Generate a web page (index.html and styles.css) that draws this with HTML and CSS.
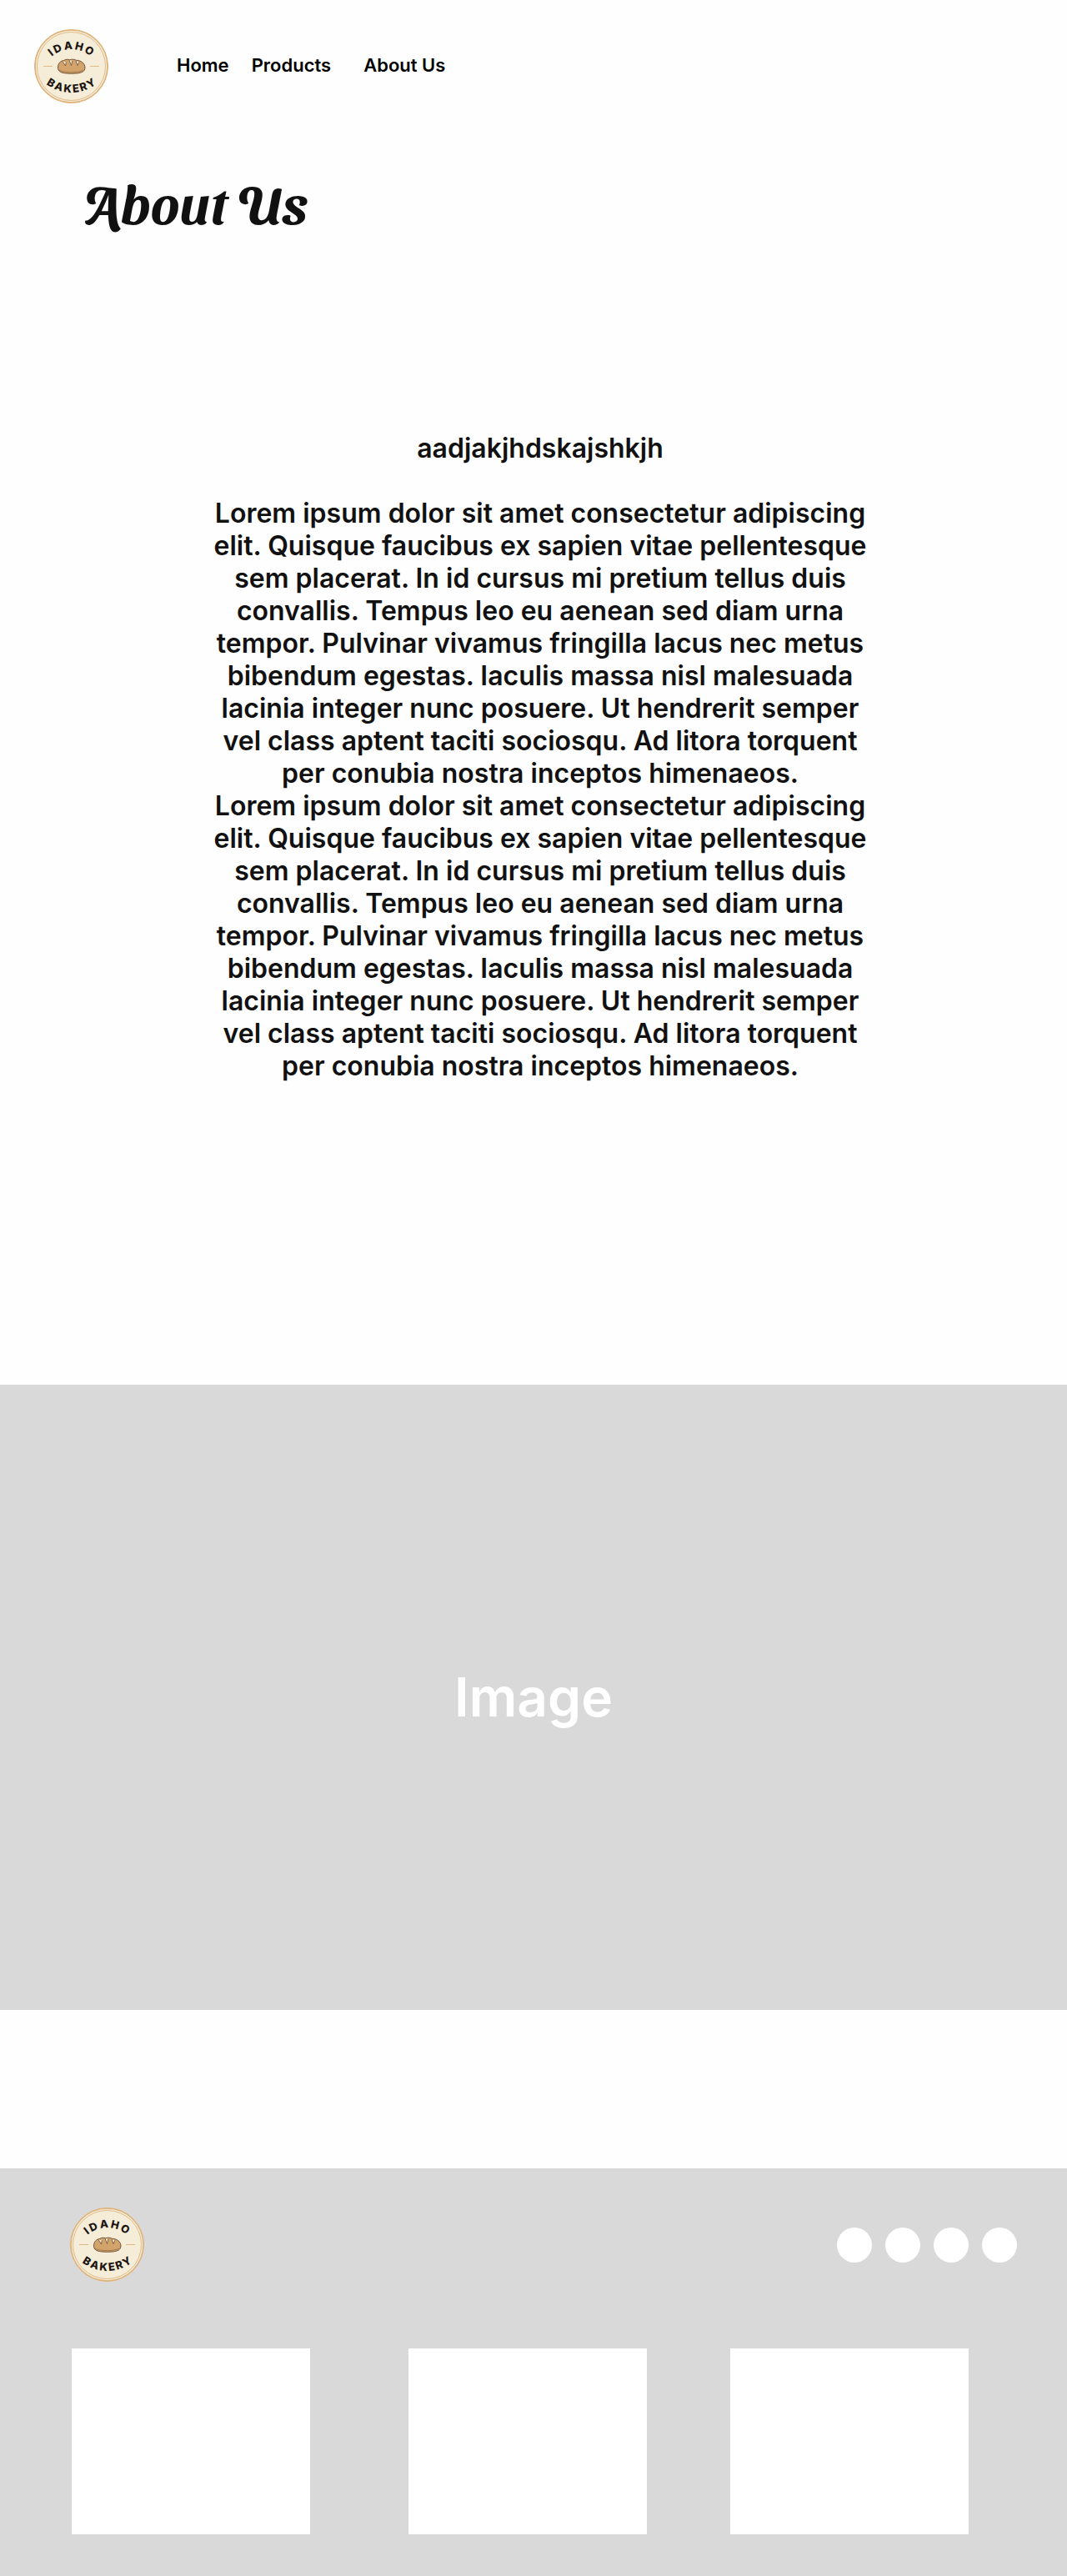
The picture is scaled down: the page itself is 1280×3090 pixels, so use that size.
FILE: index.html
```html
<!DOCTYPE html>
<html lang="en">
<head>
<meta charset="utf-8">
<meta name="viewport" content="width=device-width, initial-scale=1">
<title>About Us - Idaho Bakery</title>
<link rel="stylesheet" href="styles.css">
</head>
<body>
<svg class="symbols" aria-hidden="true">
  <symbol id="logo" viewBox="0 0 89 89">
    <circle cx="44.5" cy="44.5" r="44" fill="#f5edd8" stroke="#e0b278" stroke-width="1"/>
    <circle cx="44.5" cy="44.5" r="43.3" fill="none" stroke="#e0b278" stroke-width="1.2"/>
    <circle cx="44.5" cy="44.5" r="41" fill="none" stroke="#d6a466" stroke-width=".7"/>
    <path d="M11 44.5h11M67 44.5h11" stroke="#e0b983" stroke-width="1"/>
    <path d="M28.500 46c0-5 3-8 7-8.500 2-1.500 5-1.500 7-.8 3-.9 6-.6 8 .6 5-.2 10.500 3.500 10.500 8.700 0 5-4 7.300-16.500 7.300s-16-2.500-16-7.300z" fill="#d3a36c" stroke="#5a3a20" stroke-width=".8"/>
    <path d="M34 38.500l3.500 5.500.8-4.500M42 37l2.500 6.500 1.300-5.500M50 38l2 5.500 1.800-4" fill="#f5edd8" stroke="#5a3a20" stroke-width=".7"/>
    <path d="M30 49c4 3.500 25 3.500 29 0" fill="none" stroke="#7a5230" stroke-width=".5"/>
  </symbol>
</svg>

<header class="header">
  <a class="logo" href="#" aria-label="Idaho Bakery">
    <svg class="logo-mark" viewBox="0 0 89 89">
      <use href="#logo"/>
      <path id="top-a" d="M14 41A36 36 0 0 1 75 41" fill="none"/>
      <path id="bottom-a" d="M7 59A50 50 0 0 0 82 59" fill="none"/>
      <text class="logo-text" text-anchor="middle"><textPath href="#top-a" startOffset="50%">I&#8201;D&#8201;A&#8201;H&#8201;O</textPath></text>
      <text class="logo-text" text-anchor="middle"><textPath href="#bottom-a" startOffset="50%">B&#8201;A&#8201;K&#8201;E&#8201;R&#8201;Y</textPath></text>
    </svg>
  </a>
  <nav class="nav">
    <a class="nav-link" href="#">Home</a>
    <a class="nav-link" href="#">Products</a>
    <a class="nav-link nav-link-current" href="#" aria-current="page">About Us</a>
  </nav>
</header>

<main>
  <h1 class="title">About Us</h1>
  <section class="story">
    <p class="story-lead">aadjakjhdskajshkjh</p>
    <p>Lorem ipsum dolor sit amet consectetur adipiscing elit. Quisque faucibus ex sapien vitae pellentesque sem placerat. In id cursus mi pretium tellus duis convallis. Tempus leo eu aenean sed diam urna tempor. Pulvinar vivamus fringilla lacus nec metus bibendum egestas. Iaculis massa nisl malesuada lacinia integer nunc posuere. Ut hendrerit semper vel class aptent taciti sociosqu. Ad litora torquent per conubia nostra inceptos himenaeos.</p>
    <p>Lorem ipsum dolor sit amet consectetur adipiscing elit. Quisque faucibus ex sapien vitae pellentesque sem placerat. In id cursus mi pretium tellus duis convallis. Tempus leo eu aenean sed diam urna tempor. Pulvinar vivamus fringilla lacus nec metus bibendum egestas. Iaculis massa nisl malesuada lacinia integer nunc posuere. Ut hendrerit semper vel class aptent taciti sociosqu. Ad litora torquent per conubia nostra inceptos himenaeos.</p>
  </section>
  <div class="banner">Image</div>
</main>

<footer class="footer">
  <div class="footer-top">
    <a class="logo" href="#" aria-label="Idaho Bakery">
      <svg class="logo-mark" viewBox="0 0 89 89">
        <use href="#logo"/>
        <path id="top-b" d="M14 41A36 36 0 0 1 75 41" fill="none"/>
        <path id="bottom-b" d="M7 59A50 50 0 0 0 82 59" fill="none"/>
        <text class="logo-text" text-anchor="middle"><textPath href="#top-b" startOffset="50%">I&#8201;D&#8201;A&#8201;H&#8201;O</textPath></text>
        <text class="logo-text" text-anchor="middle"><textPath href="#bottom-b" startOffset="50%">B&#8201;A&#8201;K&#8201;E&#8201;R&#8201;Y</textPath></text>
      </svg>
    </a>
    <div class="social">
      <a class="social-dot" href="#"></a>
      <a class="social-dot" href="#"></a>
      <a class="social-dot" href="#"></a>
      <a class="social-dot" href="#"></a>
    </div>
  </div>
  <div class="cards">
    <div class="card card-wide-gap"></div>
    <div class="card"></div>
    <div class="card"></div>
  </div>
</footer>
</body>
</html>
```

FILE: styles.css
```css
* {
  box-sizing: border-box;
}

body {
  margin: 0;
  background: #fefefe;
  color: #111;
  font-family: Inter, "Liberation Sans", sans-serif;
  font-weight: 600;
}

p {
  margin: 0;
}

.symbols {
  display: none;
}

.header {
  display: flex;
  align-items: center;
  gap: 82px;
  padding: 35px 41px 0;
}

.logo,
.logo-mark {
  display: block;
  width: 89px;
  height: 89px;
}

.logo-text {
  font-size: 13px;
  font-weight: 800;
  fill: #1d1512;
}

.nav {
  display: flex;
  gap: 27px;
  padding-bottom: 4px;
}

.nav-link {
  color: #000;
  font-size: 22px;
  line-height: 28px;
  text-decoration: none;
}

.nav-link-current {
  margin-left: 12px;
}

.title {
  margin: 79px 0 0;
  padding-left: 99px;
  font-family: "Sansita Swashed", Lobster, "Liberation Serif", serif;
  font-size: 64px;
  font-weight: 600;
  line-height: 80px;
}

.story {
  max-width: 816px;
  margin: 235px auto 0;
  padding: 0 0 0 16px;
  font-size: 32px;
  line-height: 39px;
  text-align: center;
}

.story-lead {
  margin-bottom: 39px;
}

.banner {
  display: flex;
  align-items: center;
  justify-content: center;
  min-height: 750px;
  margin-top: 363px;
  background: #d9d9d9;
  color: #fff;
  font-size: 64px;
  line-height: 78px;
}

.footer {
  margin-top: 190px;
  padding: 47px 60px 50px 84px;
  background: #d9d9d9;
}

.footer-top {
  display: flex;
  align-items: center;
  justify-content: space-between;
}

.social {
  display: flex;
  gap: 16px;
}

.social-dot {
  width: 42px;
  height: 42px;
  border-radius: 50%;
  background: #fff;
}

.cards {
  display: flex;
  justify-content: space-between;
  margin: 80px 58px 0 2px;
}

.card {
  width: 286px;
  height: 223px;
  background: #fff;
}

.card-wide-gap {
  margin-right: 18px;
}
```
